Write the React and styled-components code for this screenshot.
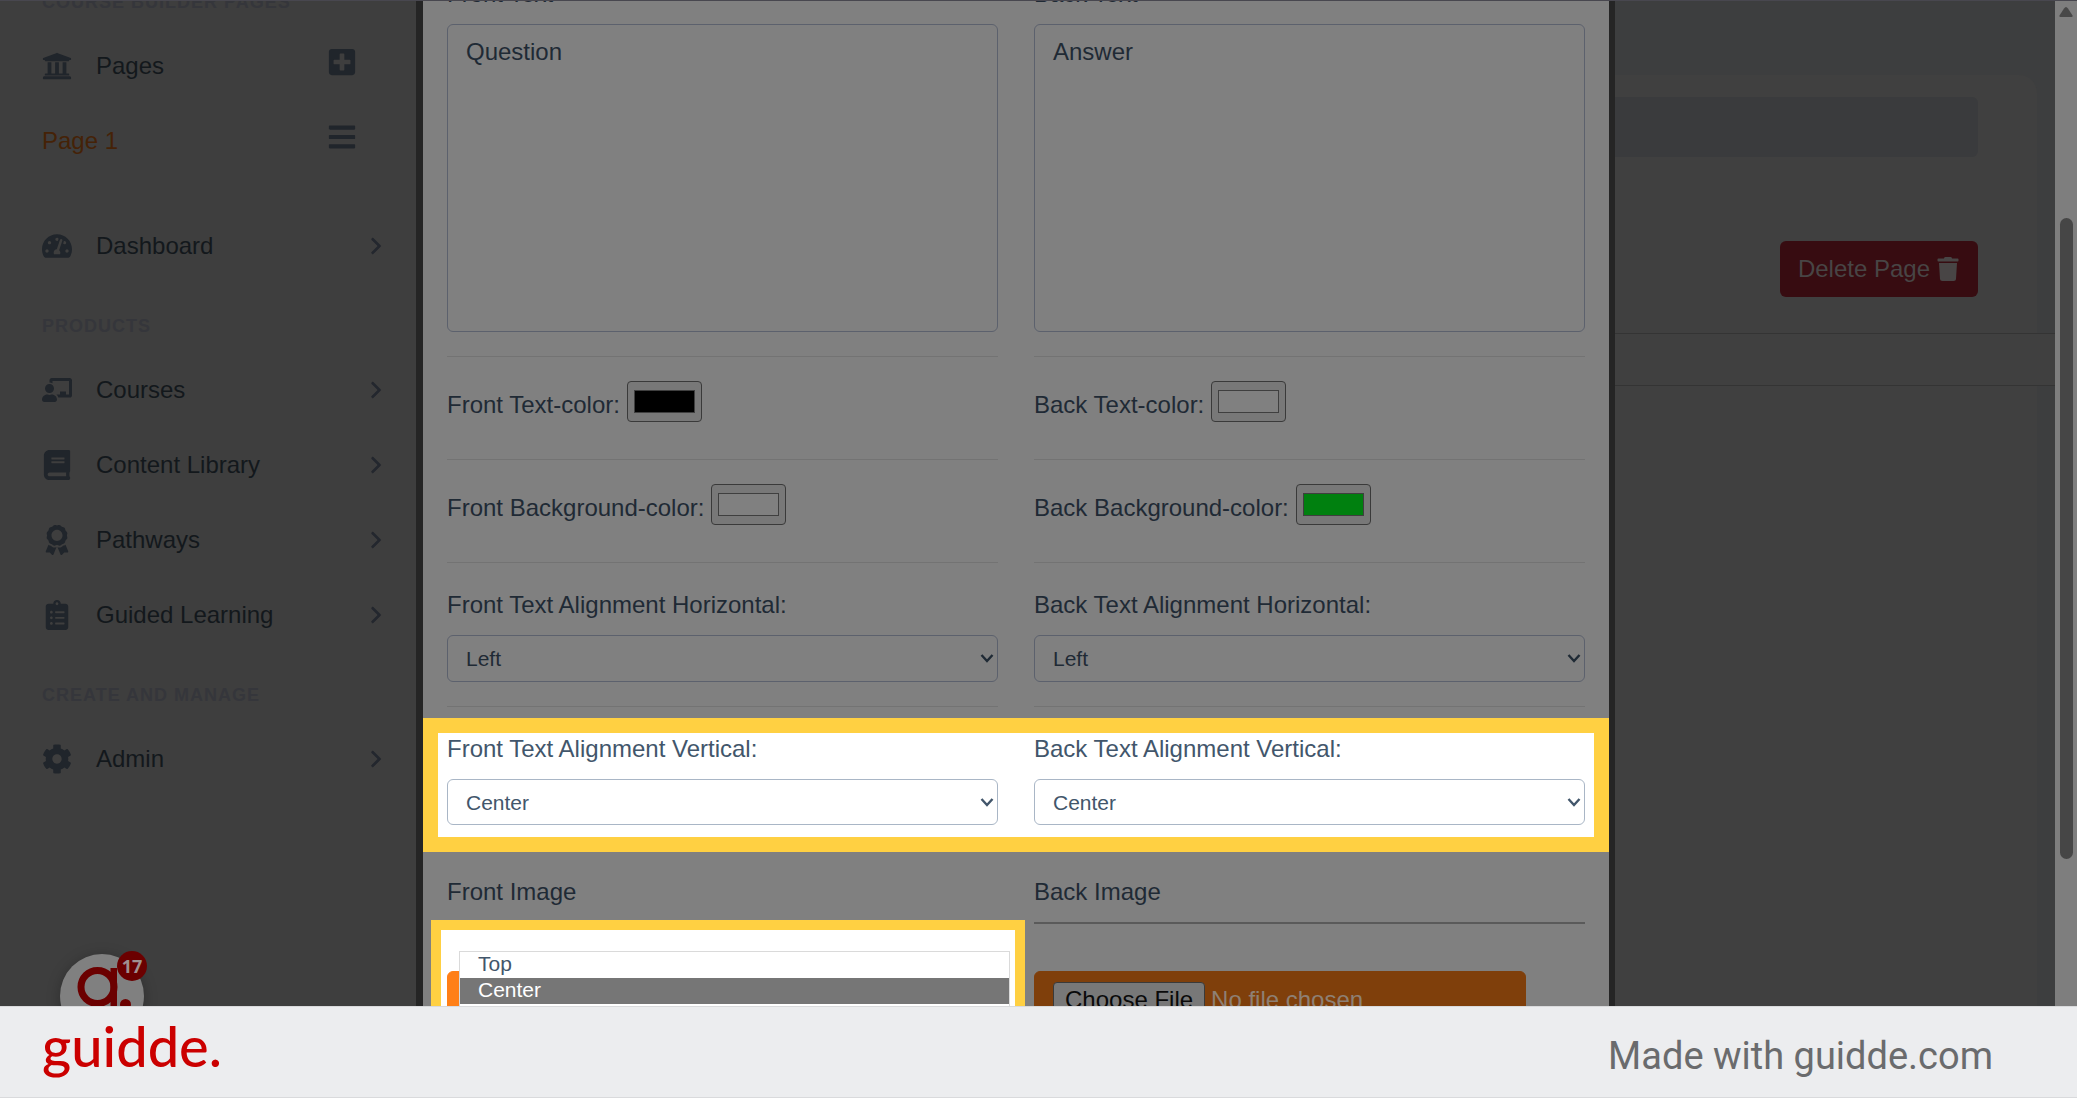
import React from 'react';
import styled, { createGlobalStyle } from 'styled-components';
import {
   FaAward,
   FaBars,
   FaBook,
   FaChalkboardTeacher,
   FaClipboardList,
   FaCog,
   FaPlusSquare,
   FaTachometerAlt,
   FaTrash,
   FaUniversity,
} from 'react-icons/fa';
import { FaChevronRight } from 'react-icons/fa6';

const GlobalStyle = createGlobalStyle`
   * {
      box-sizing: border-box;
   }
   body {
      margin: 0;
      font-family: "Liberation Sans", Arial, sans-serif;
      font-size: 24px;
   }
   button, input, select, textarea {
      font-family: inherit;
   }
`;

const Page = styled.div`
   display: flex;
   flex-direction: column;
   height: 100vh;
   overflow: hidden;
`;

const Stage = styled.div`
   flex: 1;
   min-height: 0;
   display: grid;
   grid-template-columns: 416px 1199fr 440fr 22px;
   overflow: hidden;
   border-top: 1px solid #48474f;
   background: #3e3e3e;
`;

/* ---------- sidebar ---------- */

const Sidebar = styled.nav`
   position: relative;
   min-height: 0;
   overflow: hidden;
`;

const SidebarScroll = styled.div`
   margin-top: -42px;
`;

const MenuHeading = styled.h6`
   margin: 0;
   padding: 30px 42px 12px;
   font-size: 18px;
   line-height: 27px;
   font-weight: bold;
   letter-spacing: 1px;
   text-transform: uppercase;
   color: #35363b;
`;

const MenuRow = styled.div`
   display: flex;
   align-items: center;
   height: 75px;
   padding: 0 32px 0 42px;
   margin-bottom: ${(props) => (props.$last ? '30px' : '0')};
`;

const MenuLink = styled.a`
   flex: 1;
   display: flex;
   align-items: center;
   gap: 24px;
   color: ${(props) => (props.$active ? '#452207' : '#13181c')};
   text-decoration: none;
   line-height: 36px;

   svg {
      color: #20252b;
   }
`;

const MenuAction = styled.button`
   display: flex;
   padding: 0;
   margin: 0 27px 8px 0;
   border: 0;
   background: none;
   color: #20252b;
`;

const Arrow = styled(FaChevronRight)`
   color: #23272e;
   stroke: #23272e;
   stroke-width: 20px;
`;

const ChatBubble = styled.button`
   position: absolute;
   left: 60px;
   top: 953px;
   width: 84px;
   height: 84px;
   padding: 0;
   border: 0;
   border-radius: 50%;
   background: #808080;
   box-shadow: 0 2px 14px rgba(0, 0, 0, 0.25);

   svg {
      display: block;
   }
`;

const ChatCount = styled.span`
   position: absolute;
   left: 57px;
   top: -3px;
   width: 30px;
   height: 30px;
   border-radius: 50%;
   background: #6b0000;
   color: #a09090;
   font: bold 18px/30px "Open Sans", sans-serif;
   text-align: center;
`;

/* ---------- modal ---------- */

const Modal = styled.main`
   min-width: 0;
   min-height: 0;
   overflow: hidden;
   padding: 0 24px;
   border: solid #252525;
   border-width: 0 6px 0 7px;
   background: #808080;
   color: #1f2a35;
`;

const ModalScroll = styled.form`
   margin-top: -25px;
`;

const Columns = styled.div`
   display: grid;
   grid-template-columns: 1fr 1fr;
   column-gap: 36px;
`;

const Field = styled.div`
   display: flex;
   flex-direction: column;
   min-width: 0;
`;

const Label = styled.label`
   margin-bottom: 12px;
   line-height: 36px;
`;

const TextArea = styled.textarea`
   display: block;
   width: 100%;
   height: 308px;
   padding: 9px 18px;
   border: 1px solid #5c616d;
   border-radius: 6px;
   background: transparent;
   color: #1f2a35;
   font-size: 24px;
   line-height: 36px;
   resize: none;
`;

const Divider = styled.hr`
   width: 100%;
   margin: 24px 0;
   border: 0;
   border-top: 1px solid #737373;
`;

const ImageDivider = styled.hr`
   width: 100%;
   margin: 0 0 47px;
   border: 0;
   border-top: 2px solid #5a5a5a;
`;

const ColorRow = styled.div`
   display: flex;
   align-items: flex-start;
   gap: 7px;
   height: 54px;
`;

const ColorLabel = styled.label`
   padding-top: 6px;
   line-height: 36px;
`;

const ColorInput = styled.input`
   width: 75px;
   height: 41px;
   padding: 0;
   border: 1px solid #3a3a3a;
   border-radius: 4px;
   background: #787878;

   &::-webkit-color-swatch-wrapper {
      padding: 8px 6px;
   }
   &::-webkit-color-swatch {
      border: 1px solid #3f3f3f;
      border-radius: 0;
   }
`;

const SelectWrap = styled.div`
   position: relative;

   svg {
      position: absolute;
      right: 4px;
      top: 18px;
      pointer-events: none;
   }
`;

const Select = styled.select`
   display: block;
   appearance: none;
   width: 100%;
   height: ${(props) => (props.$lit ? '46px' : '47px')};
   padding: 0 18px;
   border: 1px solid ${(props) => (props.$lit ? '#a9b6c6' : '#5c616d')};
   border-radius: 6px;
   background: transparent;
   color: inherit;
   font-size: 21px;
`;

const HighlightRow = styled.section`
   margin: -13px -24px 22px;
   padding: 0 9px 12px;
   border: 15px solid #ffd042;
   background: #ffffff;
   color: #42566b;

   ${Label} {
      margin-top: -2px;
   }
`;

const HighlightBox = styled.div`
   position: relative;
   min-height: 160px;
   margin: -2px -27px 0 -16px;
   padding: 41px 6px;
   border: 10px solid #ffd042;
   background: #ffffff;
`;

const FileInput = styled.input`
   width: 492px;
   max-width: 100%;
   padding: 10px 18px;
   border: 1px solid ${(props) => (props.$lit ? '#ff7f17' : '#7f3f0b')};
   border-radius: 6px;
   background: ${(props) => (props.$lit ? '#ff7f17' : '#7f3f0b')};
   color: ${(props) => (props.$lit ? '#ffffff' : '#8e8074')};
   font-size: 24px;
   line-height: 32px;

   &::file-selector-button {
      margin: 0 6px 0 0;
      padding: 1px 11px;
      border: 1px solid #3a3a3a;
      border-radius: 4px;
      background: #787878;
      color: #0a0a0a;
      font: inherit;
   }
`;

const OptionList = styled.ul`
   position: absolute;
   top: 21px;
   left: 18px;
   right: 5px;
   margin: 0;
   padding: 0;
   border: 1px solid #dadada;
   background: #ffffff;
   list-style: none;
`;

const Option = styled.li`
   height: 26px;
   padding: 0 18px;
   font-size: 21px;
   line-height: 24px;
   background: ${(props) => (props.$selected ? '#767676' : '#ffffff')};
   color: ${(props) => (props.$selected ? '#ffffff' : '#42566b')};
`;

/* ---------- page behind the modal ---------- */

const Behind = styled.aside`
   min-width: 0;
   background: #3d3e3f;
`;

const BehindCard = styled.div`
   height: 258px;
   margin: 74px 18px 0 0;
   padding: 22px 59px 0 0;
   border-top-right-radius: 18px;
   background: #404040;
`;

const Bar = styled.div`
   height: 60px;
   margin-bottom: 84px;
   border-radius: 0 6px 6px 0;
   background: #3a3b3d;
`;

const DeleteButton = styled.button`
   display: flex;
   align-items: center;
   gap: 6px;
   height: 56px;
   margin-left: auto;
   padding: 0 18px;
   border: 0;
   border-radius: 6px;
   background: #370c11;
   color: #484545;
   font-size: 24px;
`;

const Strip = styled.div`
   height: 53px;
   border: solid #343434;
   border-width: 1px 0;
   background: #404040;
`;

const BehindBody = styled.div`
   height: 100%;
   margin-right: 18px;
   background: #404040;
`;

const ScrollTrack = styled.div`
   display: flex;
   flex-direction: column;
   align-items: center;
   background: #7e7e7e;

   svg {
      margin: 6px 0 201px;
   }
`;

const ScrollThumb = styled.div`
   width: 13px;
   height: 641px;
   border-radius: 7px;
   background: #464646;
`;

/* ---------- footer ---------- */

const Footer = styled.footer`
   flex: none;
   display: flex;
   align-items: center;
   justify-content: space-between;
   height: 92px;
   padding: 0 84px 0 42px;
   border: solid #d9dadc;
   border-width: 1px 0;
   background: #ecedef;
`;

const Wordmark = styled.a`
   padding-bottom: 12px;
   color: #cb0000;
   font-family: Lato, sans-serif;
   font-size: 56px;
   font-weight: 500;
   line-height: 60px;
   text-decoration: none;
`;

const MadeWith = styled.span`
   padding-top: 8px;
   color: #6a6b6d;
   font-family: Roboto, sans-serif;
   font-size: 38px;
   line-height: 44px;
`;

const productLinks = [
   { text: 'Courses', Icon: FaChalkboardTeacher },
   { text: 'Content Library', Icon: FaBook },
   { text: 'Pathways', Icon: FaAward },
   { text: 'Guided Learning', Icon: FaClipboardList },
];

function MenuItem({ text, Icon }) {
   return (
      <MenuRow>
         <MenuLink href="#">
            <Icon size={30} />
            {text}
         </MenuLink>
         <Arrow size={18} />
      </MenuRow>
   );
}

function ColorField({ id, label, value }) {
   return (
      <ColorRow>
         <ColorLabel htmlFor={id}>{label}</ColorLabel>
         <ColorInput id={id} type="color" defaultValue={value} />
      </ColorRow>
   );
}

function SelectField({ id, label, value, options, lit }) {
   return (
      <Field>
         <Label htmlFor={id}>{label}</Label>
         <SelectWrap>
            <Select id={id} defaultValue={value} $lit={lit}>
               {options.map((option) => (
                  <option key={option}>{option}</option>
               ))}
            </Select>
            <svg width="14" height="11" viewBox="0 0 14 11" fill="none">
               <path d="M1.5 2 L7 8 L12.5 2" stroke="currentColor" strokeWidth="2.4" />
            </svg>
         </SelectWrap>
      </Field>
   );
}

function Dividers() {
   return (
      <Columns>
         <Divider />
         <Divider />
      </Columns>
   );
}

const horizontal = ['Left', 'Center', 'Right'];
const vertical = ['Top', 'Center', 'Bottom'];

export default function App() {
   return (
      <Page>
         <GlobalStyle />
         <Stage>
            <Sidebar>
               <SidebarScroll>
                  <MenuHeading>Course Builder Pages</MenuHeading>
                  <MenuRow>
                     <MenuLink href="#">
                        <FaUniversity size={30} />
                        Pages
                     </MenuLink>
                     <MenuAction type="button" aria-label="Add page">
                        <FaPlusSquare size={30} />
                     </MenuAction>
                  </MenuRow>
                  <MenuRow $last>
                     <MenuLink href="#" $active>Page 1</MenuLink>
                     <MenuAction type="button" aria-label="Page options">
                        <FaBars size={30} />
                     </MenuAction>
                  </MenuRow>
                  <MenuItem text="Dashboard" Icon={FaTachometerAlt} />
                  <MenuHeading>Products</MenuHeading>
                  {productLinks.map((item) => (
                     <MenuItem key={item.text} {...item} />
                  ))}
                  <MenuHeading>Create and Manage</MenuHeading>
                  <MenuItem text="Admin" Icon={FaCog} />
               </SidebarScroll>
               <ChatBubble type="button" aria-label="Open guides">
                  <svg width="84" height="84" viewBox="0 0 84 84">
                     <circle cx="37.5" cy="33" r="16.5" fill="none" stroke="#6b0000" strokeWidth="7" />
                     <rect x="50.5" y="14" width="6.5" height="50" fill="#6b0000" />
                     <circle cx="65.5" cy="50.5" r="5.5" fill="#6b0000" />
                  </svg>
                  <ChatCount>17</ChatCount>
               </ChatBubble>
            </Sidebar>

            <Modal>
               <ModalScroll>
                  <Columns>
                     <Field>
                        <Label htmlFor="front-text">Front Text</Label>
                        <TextArea id="front-text" defaultValue="Question" />
                     </Field>
                     <Field>
                        <Label htmlFor="back-text">Back Text</Label>
                        <TextArea id="back-text" defaultValue="Answer" />
                     </Field>
                  </Columns>
                  <Dividers />
                  <Columns>
                     <ColorField id="front-color" label="Front Text-color:" value="#000000" />
                     <ColorField id="back-color" label="Back Text-color:" value="#808080" />
                  </Columns>
                  <Dividers />
                  <Columns>
                     <ColorField id="front-bg" label="Front Background-color:" value="#808080" />
                     <ColorField id="back-bg" label="Back Background-color:" value="#00800f" />
                  </Columns>
                  <Dividers />
                  <Columns>
                     <SelectField id="front-h" label="Front Text Alignment Horizontal:" value="Left" options={horizontal} />
                     <SelectField id="back-h" label="Back Text Alignment Horizontal:" value="Left" options={horizontal} />
                  </Columns>
                  <Dividers />
                  <HighlightRow>
                     <Columns>
                        <SelectField id="front-v" label="Front Text Alignment Vertical:" value="Center" options={vertical} lit />
                        <SelectField id="back-v" label="Back Text Alignment Vertical:" value="Center" options={vertical} lit />
                     </Columns>
                  </HighlightRow>
                  <Columns>
                     <Field>
                        <Label htmlFor="front-image">Front Image</Label>
                        <HighlightBox>
                           <FileInput id="front-image" type="file" $lit />
                           <OptionList role="listbox" aria-label="Front Text Alignment Vertical">
                              {vertical.map((option) => (
                                 <Option
                                    key={option}
                                    role="option"
                                    aria-selected={option === 'Center'}
                                    $selected={option === 'Center'}
                                 >
                                    {option}
                                 </Option>
                              ))}
                           </OptionList>
                        </HighlightBox>
                     </Field>
                     <Field>
                        <Label htmlFor="back-image">Back Image</Label>
                        <ImageDivider />
                        <FileInput id="back-image" type="file" />
                     </Field>
                  </Columns>
               </ModalScroll>
            </Modal>

            <Behind>
               <BehindCard>
                  <Bar />
                  <DeleteButton type="button">
                     Delete Page
                     <FaTrash size={24} />
                  </DeleteButton>
               </BehindCard>
               <Strip />
               <BehindBody />
            </Behind>

            <ScrollTrack>
               <svg width="14" height="10" viewBox="0 0 14 10">
                  <path d="M7 0 Q8 0 9 1.5 L13.5 8.5 Q14 10 12.5 10 H1.5 Q0 10 0.5 8.5 L5 1.5 Q6 0 7 0Z" fill="#484848" />
               </svg>
               <ScrollThumb />
            </ScrollTrack>
         </Stage>

         <Footer>
            <Wordmark href="#">guidde.</Wordmark>
            <MadeWith>Made with guidde.com</MadeWith>
         </Footer>
      </Page>
   );
}
